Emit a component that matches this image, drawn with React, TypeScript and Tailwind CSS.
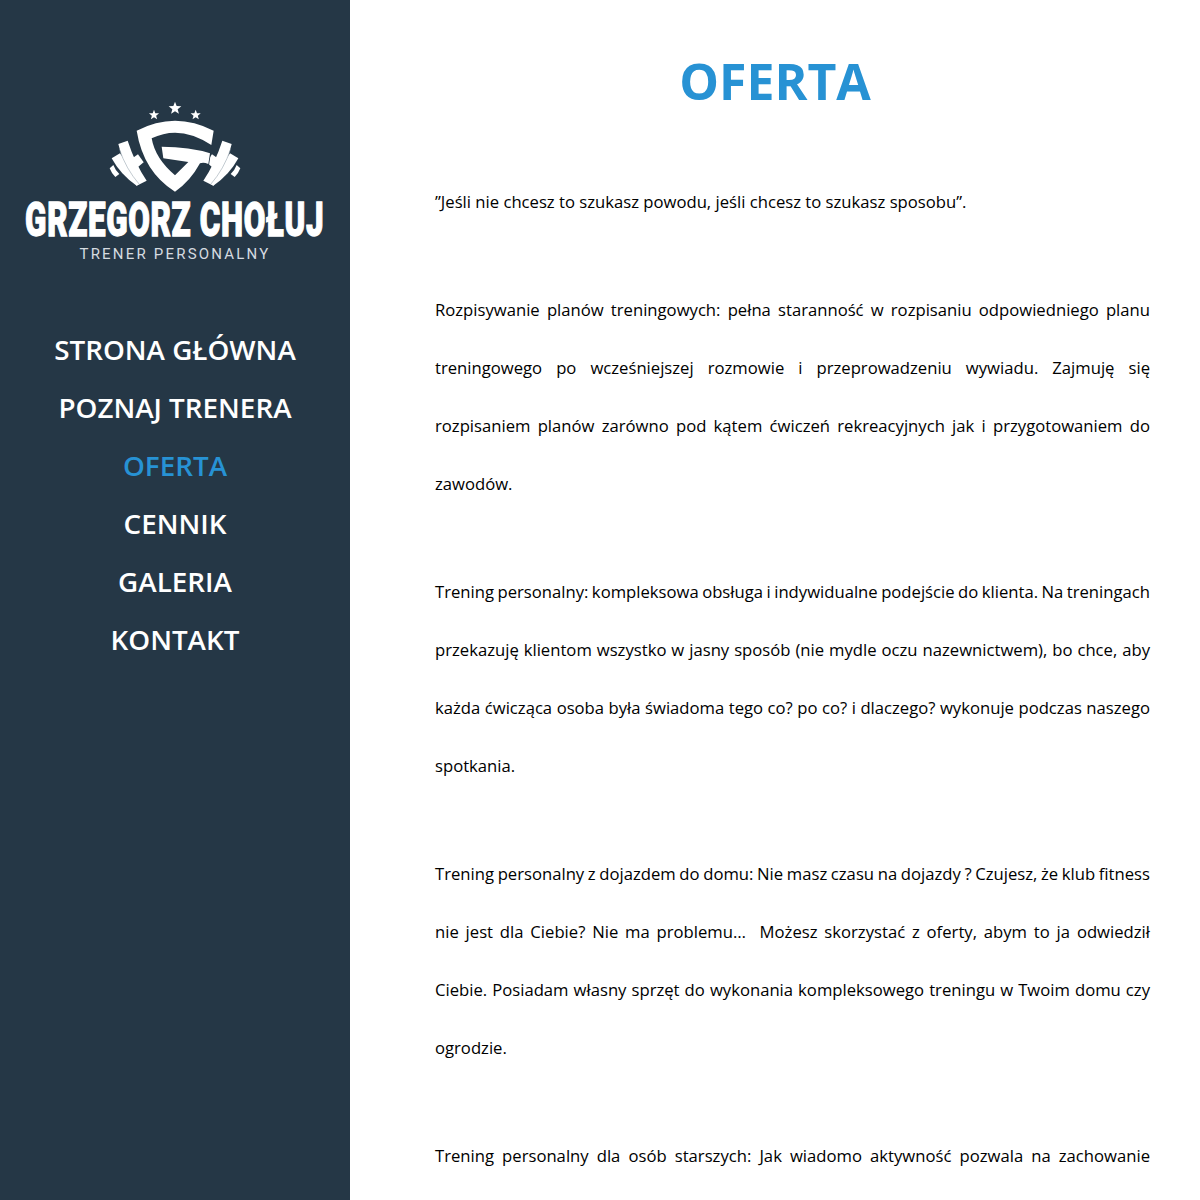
const nav = ["STRONA GŁÓWNA", "POZNAJ TRENERA", "OFERTA", "CENNIK", "GALERIA", "KONTAKT"];

const paragraphs = [
  [
    "Rozpisywanie planów treningowych: pełna staranność w rozpisaniu odpowiedniego planu",
    "treningowego po wcześniejszej rozmowie i przeprowadzeniu wywiadu. Zajmuję się",
    "rozpisaniem planów zarówno pod kątem ćwiczeń rekreacyjnych jak i przygotowaniem do",
    "zawodów.",
  ],
  [
    "Trening personalny: kompleksowa obsługa i indywidualne podejście do klienta. Na treningach",
    "przekazuję klientom wszystko w jasny sposób (nie mydle oczu nazewnictwem), bo chce, aby",
    "każda ćwicząca osoba była świadoma tego co? po co? i dlaczego? wykonuje podczas naszego",
    "spotkania.",
  ],
  [
    "Trening personalny z dojazdem do domu: Nie masz czasu na dojazdy ? Czujesz, że klub fitness",
    "nie jest dla Ciebie? Nie ma problemu…\u00a0 Możesz skorzystać z oferty, abym to ja odwiedził",
    "Ciebie. Posiadam własny sprzęt do wykonania kompleksowego treningu w Twoim domu czy",
    "ogrodzie.",
  ],
];

function Star({ cx, cy, r }: { cx: number; cy: number; r: number }) {
  const pts = Array.from({ length: 10 }, (_, i) => {
    const a = -Math.PI / 2 + (i * Math.PI) / 5;
    const rad = i % 2 === 0 ? r : r * 0.42;
    return `${cx + rad * Math.cos(a)},${cy + rad * Math.sin(a)}`;
  }).join(" ");
  return <polygon points={pts} fill="#fff" />;
}

function Plates() {
  return (
    <>
      <path d="M35 190 L60 175 L120 265 L110 272 Q62 240 35 190Z" fill="#fff" />
      <path d="M55 147 L83 137 Q105 205 140 257 L110 272 Q70 215 55 147Z" fill="#fff" />
      <path d="M58 162 Q78 222 118 268" fill="none" stroke="#8796a2" strokeWidth="1.5" />
      <path d="M29 220 L40 210 Q46 226 58 237 L46 246 Q35 236 29 220Z" fill="#fff" />
      <path d="M97 190 L114 178 L131 202 L113 217Z" fill="#fff" />
    </>
  );
}

function Logo() {
  return (
    <svg viewBox="0 0 450 300" className="w-[150px] h-[100px] block">
      <Star cx={225} cy={40} r={20} />
      <Star cx={162} cy={60} r={16} />
      <Star cx={287} cy={60} r={16} />
      <Plates />
      <g transform="translate(450 0) scale(-1 1)">
        <Plates />
      </g>
      <path
        d="M110 107 Q225 47 341 107 L334 150 Q240 88 155 130 Q165 190 225 241 L265 201 L190 190 L185 155 Q270 155 330 175 L325 207 Q310 200 300 205 Q270 260 225 290 Q130 230 110 107Z"
        fill="#fff"
        stroke="#253746"
        strokeWidth="5"
        paintOrder="stroke"
      />
    </svg>
  );
}

export default function App() {
  return (
    <div className="flex h-[1200px] w-full overflow-hidden bg-white font-['Open_Sans','Noto_Sans',sans-serif]">
      <aside className="w-[350px] shrink-0 bg-[#253746] flex flex-col items-center pt-[95px]">
        <Logo />
        <div className="mt-[2px] h-[46px] flex items-center justify-center w-[298px]">
          <span className="whitespace-nowrap font-['Roboto',sans-serif] font-black text-white text-[49px] leading-[46px] tracking-[1px] scale-x-[0.64] [-webkit-text-stroke:1.3px_white]">
            GRZEGORZ CHOŁUJ
          </span>
        </div>
        <div className="mt-[1px] text-[15px] leading-[20px] tracking-[2.2px] text-[#d5dbe0] font-['Roboto',sans-serif]">
          TRENER PERSONALNY
        </div>
        <nav className="mt-[57px] flex flex-col items-center">
          {nav.map((n) => (
            <a
              key={n}
              className={`h-[58px] flex items-center text-[27.8px] font-semibold leading-none ${
                n === "OFERTA" ? "text-[#2792d4]" : "text-white"
              }`}
            >
              {n}
            </a>
          ))}
        </nav>
      </aside>
      <main className="flex-1">
        <h1 className="pt-[49px] pb-[60px] text-center text-[50px] leading-[64px] font-bold text-[#2792d4]">
          OFERTA
        </h1>
        <div className="pl-[85px] pr-[50px] flex flex-col gap-[50px] text-[16.66px] leading-[58px] text-black">
          <p>”Jeśli nie chcesz to szukasz powodu, jeśli chcesz to szukasz sposobu”.</p>
          {paragraphs.map((lines) => (
            <p key={lines[0]} className="[word-spacing:-0.9px]">
              {lines.map((l, i) => (
                <span
                  key={l}
                  className={i < lines.length - 1 ? "block [text-align-last:justify]" : "block"}
                >
                  {l}
                </span>
              ))}
            </p>
          ))}
          <p className="[text-align-last:justify]">
            Trening personalny dla osób starszych: Jak wiadomo aktywność pozwala na zachowanie
          </p>
        </div>
      </main>
    </div>
  );
}
